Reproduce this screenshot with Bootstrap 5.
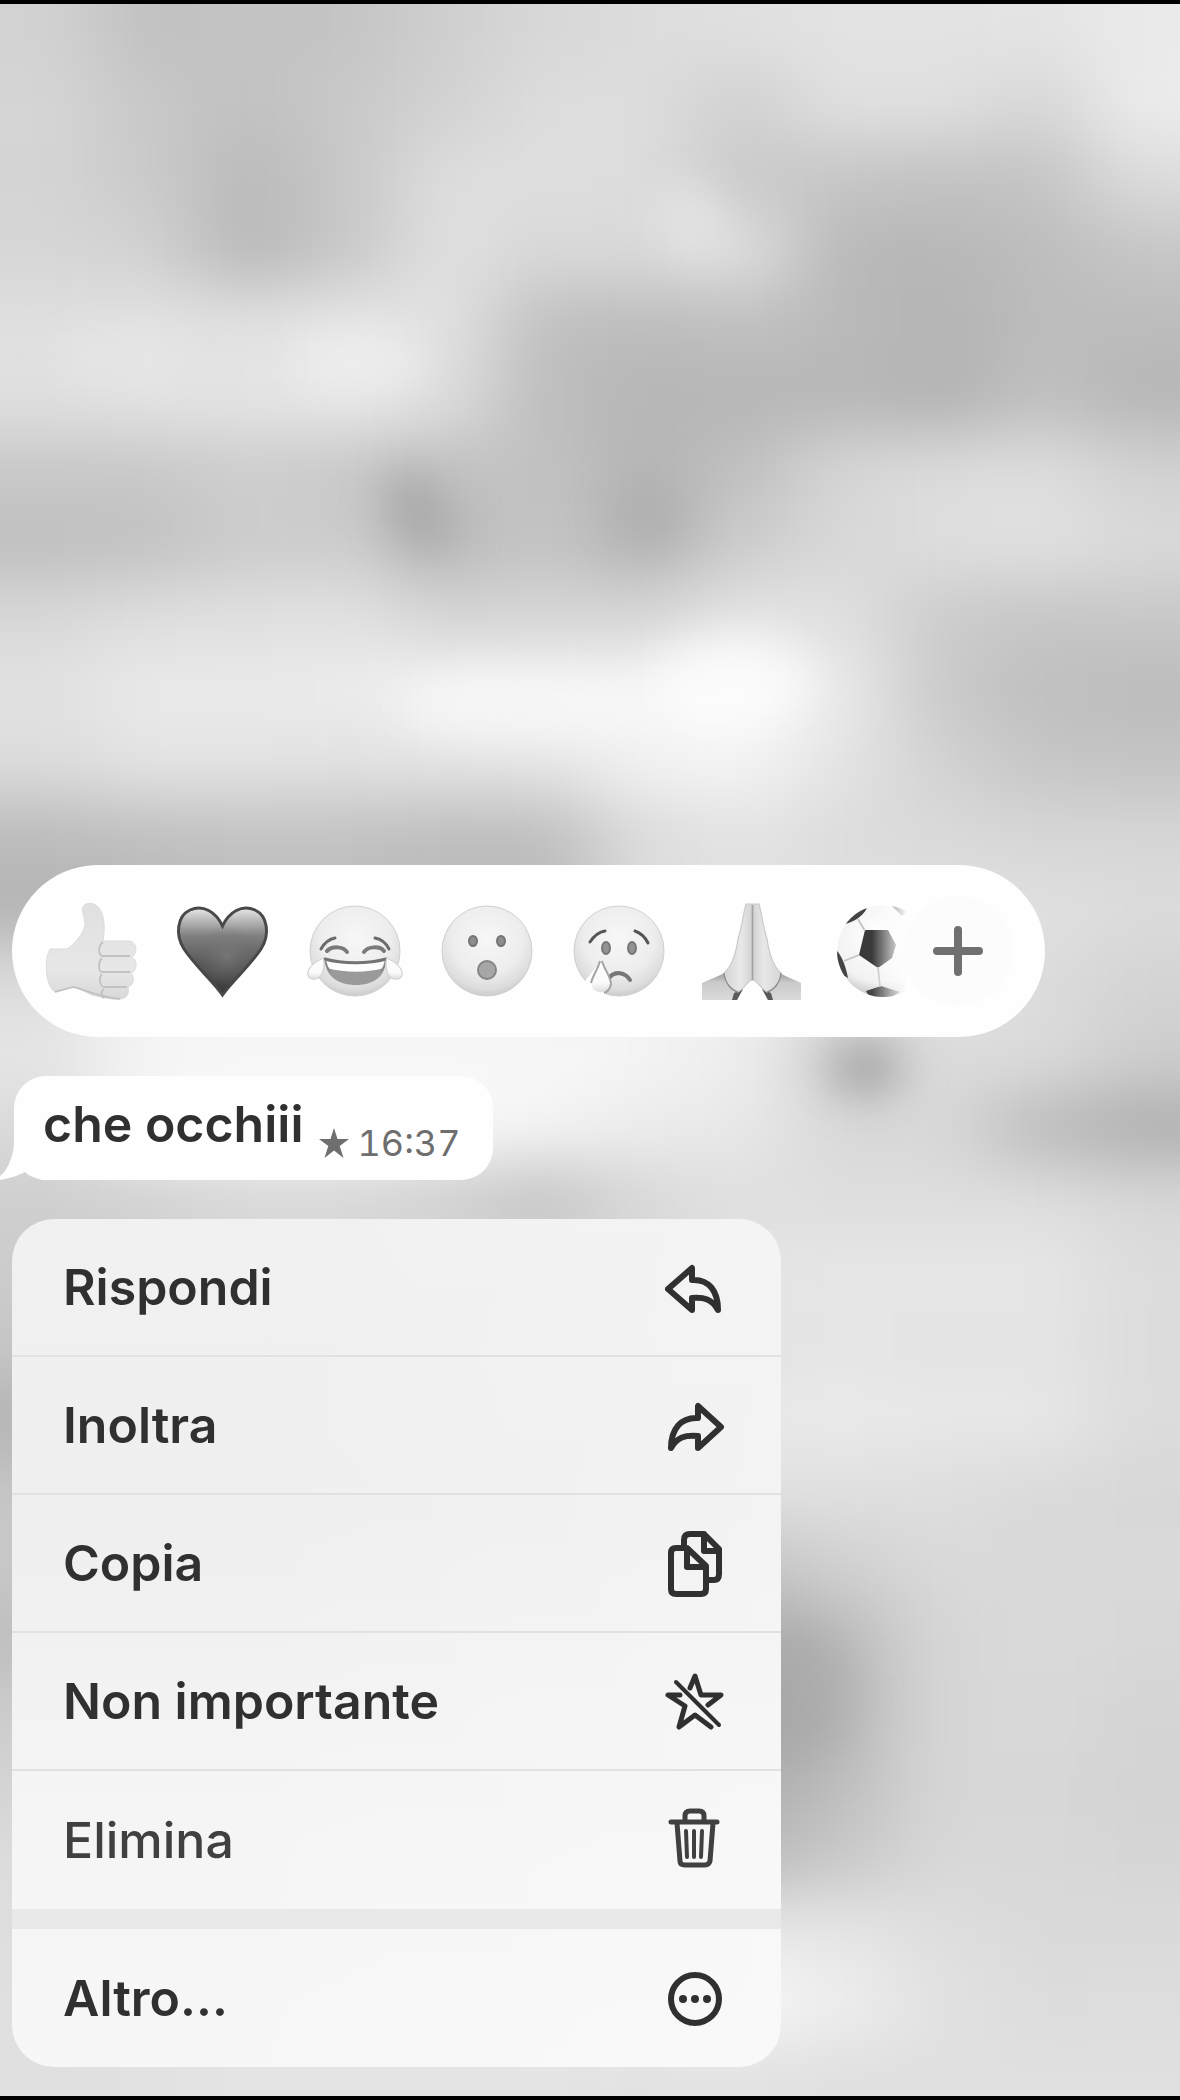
<!DOCTYPE html>
<html lang="it">
<head>
<meta charset="utf-8">
<meta name="viewport" content="width=device-width, initial-scale=1">
<title>Messaggio</title>
<link href="https://cdn.jsdelivr.net/npm/bootstrap@5.3.0/dist/css/bootstrap.min.css" rel="stylesheet">
<style>
  body { font-family: Inter, "Liberation Sans", sans-serif; color: #303030; background: #d8d8d8; }
  .screen { border-top: 4px solid #000; border-bottom: 4px solid #000; padding: 0 12px 29px; gap: 39px; isolation: isolate; }
  .backdrop { z-index: -1; }
  .reactions { width: 100%; max-width: 1033px; height: 172px; padding: 0 32px 0 12px; background: #fefefe; }
  .reaction { width: 132px; height: 132px; flex: 0 1 132px; min-width: 0; }
  .reaction svg { width: 100px; height: 100px; flex: none; }
  .reaction.cut { flex-basis: 87px; }
  .reaction.cut svg { width: 87px; overflow: visible; }
  .more-reactions { width: 110px; height: 110px; flex: none; background: #fcfcfc; }
  .bubble { height: 104px; margin-left: 2px; padding: 0 32px 0 29px; border-radius: 32px; background: #fefefe; gap: 16px; }
  .bubble-tail { left: -14px; bottom: 0; width: 46px; height: 50px; }
  .message { font-size: 50px; line-height: 60px; font-weight: 600; padding-top: 18px; }
  .stamp { font-size: 36px; line-height: 44px; color: #6e6e6e; padding-top: 45px; gap: 8px; font-variant-numeric: tabular-nums; }
  .actions { width: 100%; max-width: 769px; border-radius: 42px; background: linear-gradient(100deg, rgba(255,255,255,0) 30%, rgba(255,255,255,.3)), linear-gradient(#f1f1f1 0%, #efefef 35%, #f5f5f5 72%, #f7f7f7 100%); }
  .action { height: 138px; padding: 0 56px 0 51px; border: 0; border-bottom: 2px solid #e1e1e1; background: transparent; color: inherit; font-size: 50px; line-height: 60px; font-weight: 600; }
  .action:hover { background: rgba(0,0,0,.04); }
  .action.flush { border-bottom: 0; }
  .action.danger { font-weight: 500; color: #404040; }
  .action svg { width: 60px; height: 70px; flex: none; fill: none; stroke: currentColor; stroke-width: 6; stroke-linecap: round; stroke-linejoin: round; }
  .action .fine-line { stroke-width: 5; }
  .action .hair-line { stroke-width: 4; }
  .divider-band { height: 20px; background: #e9e9e9; }
</style>
<script src="https://cdn.jsdelivr.net/npm/bootstrap@5.3.0/dist/js/bootstrap.bundle.min.js" defer></script>
</head>
<body>
<main class="screen position-relative overflow-hidden d-flex flex-column justify-content-end align-items-start min-vh-100">

  <svg class="backdrop position-absolute top-0 start-0 w-100 h-100" viewBox="0 0 1180 2092" preserveAspectRatio="none" aria-hidden="true">
    <defs>
      <filter id="haze" filterUnits="userSpaceOnUse" x="-300" y="-300" width="1780" height="2700" color-interpolation-filters="sRGB"><feGaussianBlur stdDeviation="40 30"/></filter>
      <filter id="spot" x="-100%" y="-100%" width="300%" height="300%" color-interpolation-filters="sRGB"><feGaussianBlur stdDeviation="22"/></filter>
    </defs>
    <g id="tones" filter="url(#haze)"></g>
    <g filter="url(#spot)">
      <ellipse cx="418" cy="508" rx="32" ry="46" transform="rotate(-30 418 508)" fill="#a2a2a2" opacity=".75"/>
      <ellipse cx="650" cy="510" rx="36" ry="34" fill="#a8a8a8" opacity=".6"/>
      <ellipse cx="865" cy="1064" rx="38" ry="26" fill="#9c9c9c" opacity=".85"/>
      <ellipse cx="800" cy="1690" rx="56" ry="70" fill="#a4a4a4" opacity=".5"/>
      <ellipse cx="360" cy="356" rx="66" ry="24" fill="#f2f2f2" opacity=".7"/>
      <ellipse cx="120" cy="352" rx="70" ry="24" fill="#ebebeb" opacity=".5"/>
      <ellipse cx="690" cy="215" rx="30" ry="40" transform="rotate(-30 690 215)" fill="#e8e8e8" opacity=".7"/>
      <ellipse cx="730" cy="676" rx="80" ry="42" fill="#fdfdfd" opacity=".6"/>
      <ellipse cx="520" cy="704" rx="120" ry="30" fill="#fafafa" opacity=".6"/>
    </g>
  </svg>

  <section class="reactions rounded-pill d-flex align-items-center" aria-label="Reazioni">
    <button type="button" class="reaction btn p-0 border-0 d-flex justify-content-center align-items-center" aria-label="Pollice in su">
      <svg viewBox="0 0 100 100">
        <defs><linearGradient id="hand" x1="0" y1="0" x2="0" y2="1"><stop offset="0" stop-color="#e0e0e0"/><stop offset=".7" stop-color="#e7e7e7"/><stop offset="1" stop-color="#d8d8d8"/></linearGradient></defs>
        <path d="M10 48H27C36 42 43 33 45 24C45 15 41 10 43 6C45 1 55 1 59 7C65 15 65 28 63 40H90C99 43 96 54 92 56C98 60 97 70 91 72C95 77 94 84 88 86C90 93 86 98 80 98C72 99 60 96 52 94C45 91 39 87 33 86L15 91C5 85 4 58 10 48Z" fill="url(#hand)" stroke="#dcdcdc" stroke-width="1"/>
        <path d="M63 41C58 45 58 53 62 55H90M62 57C58 61 58 70 62 71H90M62 73C58 77 60 85 64 86H87M64 88C60 91 61 95 64 97" fill="none" stroke="#c2c2c2" stroke-width="1.8"/>
        <path d="M15 91L33 86C44 88 53 95 80 98" fill="none" stroke="#bdbdbd" stroke-width="1.5"/>
      </svg>
    </button>
    <button type="button" class="reaction btn p-0 border-0 d-flex justify-content-center align-items-center" aria-label="Cuore">
      <svg viewBox="0 0 100 100">
        <defs>
          <linearGradient id="heart" x1="0" y1="0" x2="0" y2="1"><stop offset="0" stop-color="#e8e8e8"/><stop offset=".12" stop-color="#c0c0c0"/><stop offset=".32" stop-color="#808080"/><stop offset=".6" stop-color="#5c5c5c"/><stop offset="1" stop-color="#363636"/></linearGradient>
          <radialGradient id="heartGlow" cx=".55" cy=".55" r=".35"><stop offset="0" stop-color="#7c7c7c" stop-opacity=".7"/><stop offset="1" stop-color="#707070" stop-opacity="0"/></radialGradient>
        </defs>
        <path d="M50.5 94C41 80 24 66 12 48C3 34 5 15 18 9C31 3 44 11 50.5 25C57 11 70 3 83 9C96 15 98 34 89 48C77 66 60 80 50.5 94Z" fill="url(#heart)"/>
        <path d="M50.5 94C41 80 24 66 12 48C3 34 5 15 18 9C31 3 44 11 50.5 25C57 11 70 3 83 9C96 15 98 34 89 48C77 66 60 80 50.5 94Z" fill="url(#heartGlow)" stroke="#484848" stroke-width="3"/>
      </svg>
    </button>
    <button type="button" class="reaction btn p-0 border-0 d-flex justify-content-center align-items-center" aria-label="Risata con lacrime">
      <svg viewBox="0 0 100 100">
        <defs>
          <radialGradient id="face" cx=".5" cy=".36" r=".66"><stop offset="0" stop-color="#f7f7f7"/><stop offset=".6" stop-color="#ededed"/><stop offset=".86" stop-color="#dcdcdc"/><stop offset="1" stop-color="#c6c6c6"/></radialGradient>
          <linearGradient id="tear" x1="0" y1="0" x2="0" y2="1"><stop offset="0" stop-color="#fff"/><stop offset=".7" stop-color="#fafafa"/><stop offset="1" stop-color="#dedede"/></linearGradient>
        </defs>
        <circle cx="51" cy="50" r="45" fill="url(#face)" stroke="#d0d0d0" stroke-width="1"/>
        <path d="M17 48C21 41 25 38 31 37M71 37C77 38 82 42 85 48" fill="none" stroke="#6b6b6b" stroke-width="3" stroke-linecap="round"/>
        <path d="M23 50C28 45 39 45 43 51M60 51C64 45 76 45 80 50" fill="none" stroke="#7a7a7a" stroke-width="4" stroke-linecap="round"/>
        <path d="M21 58C38 63 65 63 82 58C82 76 69 84 52 84C35 84 21 76 21 58Z" fill="#9a9a9a"/>
        <path d="M21 58C38 63 65 63 82 58L80 67C62 72 42 72 23 67Z" fill="#fdfdfd"/>
        <path d="M21 58C38 63 65 63 82 58" fill="none" stroke="#737373" stroke-width="3" stroke-linecap="round"/>
        <path d="M21 59C22 64 23 67 26 71M82 59C81 64 80 67 77 71" fill="none" stroke="#8a8a8a" stroke-width="2"/>
        <path d="M19 57C13 60 2 66 4 74C6 80 15 79 18 73C20 68 21 62 19 57ZM83 57C89 60 100 66 98 74C96 80 87 79 84 73C82 68 81 62 83 57Z" fill="url(#tear)" stroke="#d4d4d4" stroke-width="1.3"/>
      </svg>
    </button>
    <button type="button" class="reaction btn p-0 border-0 d-flex justify-content-center align-items-center" aria-label="Sorpresa">
      <svg viewBox="0 0 100 100">
        <circle cx="51" cy="50" r="45" fill="url(#face)" stroke="#d0d0d0" stroke-width="1"/>
        <g fill="#8e8e8e" stroke="#747474" stroke-width="2"><ellipse cx="37" cy="40" rx="4" ry="5"/><ellipse cx="65" cy="40" rx="4" ry="5"/><circle cx="51" cy="69" r="9" fill="#a6a6a6" stroke="#858585"/></g>
      </svg>
    </button>
    <button type="button" class="reaction btn p-0 border-0 d-flex justify-content-center align-items-center" aria-label="Pianto">
      <svg viewBox="0 0 100 100">
        <circle cx="51" cy="50" r="45" fill="url(#face)" stroke="#d0d0d0" stroke-width="1"/>
        <g fill="#929292" stroke="#777" stroke-width="2"><ellipse cx="38" cy="47" rx="4" ry="6"/><ellipse cx="64" cy="47" rx="4" ry="6"/></g>
        <path d="M22 41C26 35 30 31 37 30M67 30C73 32 77 36 80 42" fill="none" stroke="#555" stroke-width="3" stroke-linecap="round"/>
        <path d="M42 76C47 70 57 71 62 79" fill="none" stroke="#777" stroke-width="4" stroke-linecap="round"/>
        <path d="M17 80L28 66L40 99H14Z" fill="#fefefe"/>
        <path d="M33 59C31 68 22 77 24 85C26 93 41 94 43 83C43 76 36 68 33 59Z" fill="url(#tear)"/>
        <path d="M32 60C30 68 25 74 23 82M34 60C36 68 43 76 43 83C42 88 39 91 36 92" fill="none" stroke="#a4a4a4" stroke-width="2"/>
      </svg>
    </button>
    <button type="button" class="reaction btn p-0 border-0 d-flex justify-content-center align-items-center" aria-label="Mani giunte">
      <svg viewBox="0 0 100 100" overflow="visible">
        <defs>
          <linearGradient id="sleeve" x1="0" y1="0" x2="0" y2="1"><stop offset="0" stop-color="#9a9a9a"/><stop offset=".35" stop-color="#cacaca"/><stop offset="1" stop-color="#dadada"/></linearGradient>
          <linearGradient id="palms" x1="0" x2="1"><stop offset="0" stop-color="#d6d6d6"/><stop offset=".3" stop-color="#e8e8e8"/><stop offset=".5" stop-color="#d2d2d2"/><stop offset=".7" stop-color="#e8e8e8"/><stop offset="1" stop-color="#d6d6d6"/></linearGradient>
        </defs>
        <path d="M2 82L25 72L43 88L37 99H2ZM101 82L79 72L62 88L68 99H101Z" fill="url(#sleeve)"/>
        <path d="M43 88L37 99H32L34 92ZM62 88L68 99H73L71 92Z" fill="#5a5a5a"/>
        <path d="M46 3H59C62 14 63 26 67 38C69 52 74 66 81 72C80 82 74 89 67 91C61 88 57 79 52.500 79C48 79 44 88 38 91C31 89 25 82 24 72C31 66 36 52 38 38C42 26 43 14 46 3Z" fill="url(#palms)" stroke="#cacaca" stroke-width="1.200"/>
        <path d="M24 72C25 82 31 89 38 91M81 72C80 82 74 89 67 91" fill="none" stroke="#8c8c8c" stroke-width="1.300"/>
        <path d="M52.500 4V79" stroke="#a2a2a2" stroke-width="1.700"/>
      </svg>
    </button>
    <button type="button" class="reaction cut btn p-0 border-0 d-flex justify-content-center align-items-center" aria-label="Pallone">
      <svg viewBox="0 0 87 100">
        <defs>
          <clipPath id="ballClip"><circle cx="67" cy="50" r="46"/></clipPath>
          <radialGradient id="ball" cx=".45" cy=".35" r=".65"><stop offset="0" stop-color="#fff"/><stop offset=".75" stop-color="#f2f2f2"/><stop offset="1" stop-color="#c6c6c6"/></radialGradient>
          <linearGradient id="veil" gradientUnits="userSpaceOnUse" x1="56" y1="0" x2="92" y2="0"><stop offset="0" stop-color="#fefefe" stop-opacity="0"/><stop offset=".5" stop-color="#fefefe" stop-opacity=".55"/><stop offset="1" stop-color="#fefefe"/></linearGradient>
        </defs>
        <g clip-path="url(#ballClip)">
          <circle cx="67" cy="50" r="46" fill="url(#ball)"/>
          <path d="M49 29H72L80 44L76 57L62 67L43 54Z" fill="#3a3a3a"/>
          <path d="M27 24L33 12L51 7C46 17 36 21 27 24ZM19 48C26 54 30 66 32 77L20 70ZM50 90L65 85L84 91L72 99H55ZM75 4L92 9L86 15Z" fill="#444"/>
          <path d="M42 18L49 30M28 60L43 54M62 66L64 86" stroke="#c4c4c4" stroke-width="1.800"/>
        </g>
        <rect x="56" y="0" width="36" height="100" fill="url(#veil)"/>
        <rect x="92" y="0" width="28" height="100" fill="#fefefe"/>
      </svg>
    </button>
    <button type="button" class="more-reactions btn rounded-circle p-0 border-0 position-relative d-flex justify-content-center align-items-center" aria-label="Altre reazioni">
      <svg width="54" height="54" viewBox="0 0 54 54"><path d="M27 6V48M6 27H48" stroke="#707070" stroke-width="8" stroke-linecap="round"/></svg>
    </button>
  </section>

  <article class="bubble position-relative d-flex align-items-start">
    <svg class="bubble-tail position-absolute" viewBox="0 0 46 50" aria-hidden="true"><path d="M14 0V14C13 29 6 42 0 46V50C11 48 21 45 28 40C33 48 40 50 46 50V0Z" fill="#fefefe"/></svg>
    <span class="message position-relative">che occhiii</span>
    <span class="stamp d-flex align-items-center">
      <svg width="30" height="30" viewBox="0 0 30 30" aria-label="Importante"><path d="M15 0L18.500 11H30L20.700 18L24.500 30L15 22.500L5.500 30L9.300 18L0 11H11.500Z" fill="#6e6e6e"/></svg>
      <time datetime="16:37">16:37</time>
    </span>
  </article>

  <nav class="actions d-flex flex-column overflow-hidden" aria-label="Azioni messaggio">
    <button type="button" class="action d-flex align-items-center justify-content-between"><span>Rispondi</span>
      <svg viewBox="0 0 60 70"><path d="M3 37L27 16V28C44 27 53 39 53 58C47 47 39 45 27 46V58Z"/></svg></button>
    <button type="button" class="action d-flex align-items-center justify-content-between"><span>Inoltra</span>
      <svg viewBox="0 0 60 70"><path d="M56 37L33 16V28C16 27 6 39 6 58C12 47 20 45 33 46V58Z"/></svg></button>
    <button type="button" class="action d-flex align-items-center justify-content-between"><span>Copia</span>
      <svg viewBox="0 0 60 70"><path d="M11 20H22L41 38V61Q41 66 36 66H11Q6 66 6 61V25Q6 20 11 20ZM22 20V39H41M19 20V12Q19 6 25 6H39L54 21V46Q54 52 49 52H42M39 6V23H54"/></svg></button>
    <button type="button" class="action d-flex align-items-center justify-content-between"><span>Non importante</span>
      <svg viewBox="0 0 60 70"><path class="fine-line" d="M25 22L30 10L36 29H56L43 39M46 61L30 49L14 61L20 40L3 29H15"/><path class="hair-line" d="M11 16L54 59"/></svg></button>
    <button type="button" class="action flush danger d-flex align-items-center justify-content-between"><span>Elimina</span>
      <svg viewBox="0 0 60 70"><path class="fine-line" d="M6 17H52M20 16V11Q20 6 25 6H34Q39 6 39 11V16M12 18L15 56Q15 60 20 60H40Q44 60 45 56L48 18"/><path class="hair-line" d="M21 26L22 52M29 26V52M37 26L36 52"/></svg></button>
    <div class="divider-band" role="separator"></div>
    <button type="button" class="action flush d-flex align-items-center justify-content-between"><span>Altro...</span>
      <svg viewBox="0 0 60 70"><circle cx="30" cy="36" r="24"/><g fill="currentColor" stroke="none"><circle cx="18" cy="36" r="4"/><circle cx="30" cy="36" r="4"/><circle cx="42" cy="36" r="4"/></g></svg></button>
  </nav>
</main>
<script>
  // Grey levels of the out-of-focus chat wallpaper, row by row from the top.
  const tones = `
    d2 c1 c4 c4 cf d8 dc e0 e3 e3 e4 ea
    d5 c8 c1 c9 d2 dd dd d0 e0 e0 d6 ec
    d4 ca ba c7 de de dd ca c6 c2 c4 dc
    d6 d2 b8 c8 e0 d8 da e0 b8 b7 bd c6
    e0 e2 e2 e6 e2 c0 bc c0 ba b4 bc bc
    e0 e4 e4 ea de bd b6 b6 b8 b2 c0 b6
    c8 c8 ce c8 c2 c2 b6 c0 d6 dc de d2
    bf c2 cc cc bc c4 b6 cc d8 de e1 da
    d8 de e0 e2 d4 d6 d6 e4 e0 cc c6 c8
    e2 ea ea ec f6 f6 f8 ff ea ca bf bc
    dc e4 e4 e2 e4 e6 f2 f4 e4 d2 c6 c4
    bc c0 c2 c2 be be dc e4 dc da d6 d6
    b4 b8 bc bc b8 b8 de e2 e0 e0 e0 dc
    dc f0 f0 f0 f0 f0 f0 f0 e0 e0 dc d4
    e6 f6 f8 f8 f8 f8 f4 ee d0 dc dc ce
    da f4 f8 f8 f8 f4 ec e8 d8 d8 bc b0
    cf d2 d8 d8 d0 c4 d8 e0 de de de d8
    cc d0 d8 d8 d8 d8 dc e4 e7 e7 e7 dc
    c6 d0 d8 d8 d8 d8 dc e4 e5 e4 e4 dc
    b4 d0 d8 d8 d8 d8 dc e8 ea e8 e8 dc
    c6 d0 d8 d8 d8 d8 d8 e0 e0 de da d8
    c8 d0 d8 d8 d8 d8 d0 c4 d0 da d9 d9
    be d0 d8 d8 d8 d8 c0 ac bc d6 da d8
    cc d4 d8 d8 d8 d8 b4 a4 ba d6 d9 d5
    d4 d8 d8 d8 d8 d8 b8 ac be d6 d8 d3
    dc dc dc dc dc dc c4 ba c8 d8 d8 d6
    de e0 e4 e4 e4 e4 e8 e8 e6 de da da
    e0 e2 e6 e6 e6 e8 f0 f8 ee e2 dc dd
    e0 e2 e4 e4 e4 e4 e2 e2 e0 e0 e0 e0`.trim().split('\n').map(r => r.trim().split(' '));
  const group = document.getElementById('tones');
  const w = 99, h = 73, lift = 8, bleed = 150;
  tones.forEach((row, j) => row.forEach((tone, i) => {
    const cell = document.createElementNS('http://www.w3.org/2000/svg', 'rect');
    const left = i === 0 ? -bleed : i * w;
    const top = j === 0 ? -bleed : j * h - lift;
    cell.setAttribute('x', left);
    cell.setAttribute('y', top);
    cell.setAttribute('width', (i === row.length - 1 ? 1180 + bleed : (i + 1) * w) - left + 1);
    cell.setAttribute('height', (j === tones.length - 1 ? 2100 + bleed : (j + 1) * h - lift) - top + 1);
    cell.setAttribute('fill', '#' + tone + tone + tone);
    group.append(cell);
  }));
</script>
</body>
</html>
